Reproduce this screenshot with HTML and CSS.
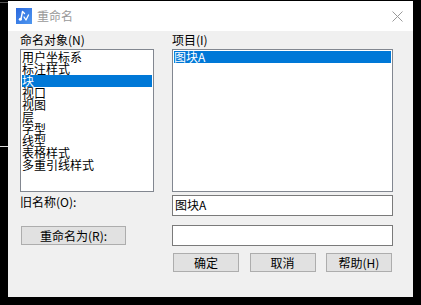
FILE: index.html
```html
<!DOCTYPE html>
<html lang="zh-CN">
<head>
    <meta charset="UTF-8">
    <title>重命名</title>
    <link rel="stylesheet" href="styles.css">
</head>
<body>
    <div class="stray stray-top"></div>
    <div class="stray stray-left"></div>
    <div class="dialog">
        <div class="titlebar">
            <svg class="app-icon" width="16" height="16" viewBox="0 0 16 16">
                <defs>
                    <linearGradient id="ig" x1="0" y1="0" x2="1" y2="1">
                        <stop offset="0" stop-color="#2a68de"/>
                        <stop offset="1" stop-color="#4f98f0"/>
                    </linearGradient>
                </defs>
                <rect width="16" height="16" fill="url(#ig)"/>
                <path d="M6.5 3.5 L5 11 M6.5 3.5 L8.5 5.5" fill="none" stroke="#fff" stroke-width="1.4" stroke-linecap="round"/>
                <circle cx="4.3" cy="11.2" r="1.5" fill="#fff"/>
                <path d="M8 9 L10 12 L12.5 7" fill="none" stroke="#fff" stroke-width="1.3" stroke-linejoin="round" stroke-linecap="round"/>
            </svg>
            <span class="title">重命名</span>
            <svg class="close" width="11" height="11" viewBox="0 0 11 11">
                <path d="M0.5 0.5 L10.5 10.5 M10.5 0.5 L0.5 10.5" stroke="#9a9a9a" stroke-width="1"/>
            </svg>
        </div>
        <div class="content">
            <div class="label">命名对象(N)</div>
            <div class="label">项目(I)</div>

            <ul class="list">
                <li>用户坐标系</li>
                <li>标注样式</li>
                <li class="selected">块</li>
                <li>视口</li>
                <li>视图</li>
                <li>层</li>
                <li>字型</li>
                <li>线型</li>
                <li>表格样式</li>
                <li>多重引线样式</li>
            </ul>
            <ul class="list">
                <li class="selected">图块A</li>
            </ul>

            <div class="label old-label">旧名称(O):</div>
            <div class="field old-field">图块A</div>

            <div class="rename-cell"><button class="btn rename-btn">重命名为(R):</button></div>
            <div class="field new-field"></div>

            <div></div>
            <div class="actions">
                <button class="btn">确定</button>
                <button class="btn">取消</button>
                <button class="btn">帮助(H)</button>
            </div>
        </div>
    </div>
</body>
</html>
```

FILE: styles.css
```css
/* Page */
body {
    margin: 0;
    background: #000;
    font-family: "Noto Sans CJK SC", "Noto Sans", sans-serif;
    font-size: 12px;
    color: #000;
    position: relative;
    height: 305px;
    overflow: hidden;
}

/* little leftovers of other windows behind the dialog */
.stray {
    position: absolute;
    left: 0;
    width: 8px;
    height: 1px;
}

.stray-top {
    top: 2px;
    background: #555;
}

.stray-left {
    top: 146px;
    background: #ddd;
}

/* Dialog window */
.dialog {
    margin: 1px 0 0 8px;
    width: 405px;
    height: 296px;
    background: #f0f0f0;
}

.titlebar {
    height: 30px;
    background: #fff;
    display: flex;
    align-items: center;
    padding-left: 8px;
}

.app-icon {
    flex: none;
}

.title {
    margin-left: 5px;
    color: #999;
    font-size: 12px;
    line-height: 16px;
}

.close {
    margin-left: auto;
    margin-right: 10px;
}

/* Content grid */
.content {
    display: grid;
    grid-template-columns: 134px 221px;
    grid-template-rows: 18px 143px auto auto auto;
    column-gap: 18px;
    padding-left: 12px;
}

.label {
    line-height: 16px;
    padding-top: 1px;
}

.list {
    list-style: none;
    margin: 0;
    padding: 1px;
    background: #fff;
    border: 1px solid #828790;
}

.list li {
    height: 12px;
    line-height: 12px;
    white-space: nowrap;
}

.list li.selected {
    background: #0078d7;
    color: #fff;
}

.old-label {
    margin-top: 3px;
    padding-top: 0;
    line-height: 14px;
}

.field {
    background: #fff;
    border: 1px solid #7a7a7a;
    box-sizing: border-box;
    padding-left: 2px;
    line-height: 18px;
}

.old-field {
    margin-top: 3px;
    height: 21px;
}

.new-field {
    margin-top: 9px;
    height: 21px;
}

.rename-cell {
    margin-top: 10px;
}

/* Buttons */
.btn {
    font-family: inherit;
    font-size: 12px;
    color: #000;
    background: #e1e1e1;
    border: 1px solid #adadad;
    height: 19px;
    padding: 0;
    margin: 0;
    line-height: 15px;
}

.rename-btn {
    width: 105px;
    margin-left: 1px;
}

.actions {
    margin-top: 7px;
    display: flex;
    justify-content: space-between;
    padding: 0 1px;
}

.actions .btn {
    width: 66px;
}
```
